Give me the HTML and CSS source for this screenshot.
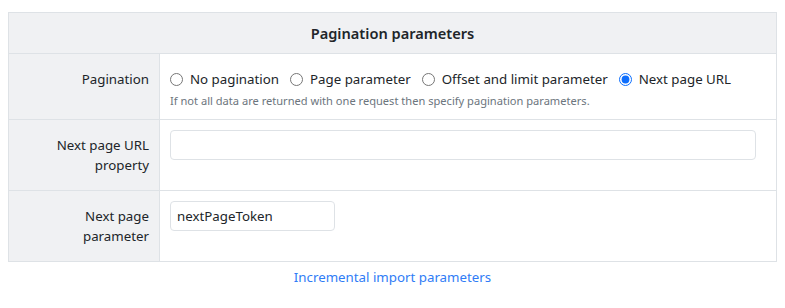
FILE: index.html
```html
<!DOCTYPE html>
<html lang="en">
<head>
    <meta charset="UTF-8">
    <title>Pagination parameters</title>
    <link rel="stylesheet" href="styles.css">
</head>
<body>
    <table class="params">
        <tr>
            <th colspan="2" class="params-title">Pagination parameters</th>
        </tr>
        <tr>
            <td class="label">Pagination</td>
            <td class="value">
                <div class="radios">
                    <label><input type="radio" name="pagination"> No pagination</label>
                    <label><input type="radio" name="pagination"> Page parameter</label>
                    <label><input type="radio" name="pagination"> Offset and limit parameter</label>
                    <label><input type="radio" name="pagination" checked> Next page URL</label>
                </div>
                <div class="help">If not all data are returned with one request then specify pagination parameters.</div>
            </td>
        </tr>
        <tr>
            <td class="label">Next page URL property</td>
            <td class="value"><input type="text" class="field field-wide"></td>
        </tr>
        <tr>
            <td class="label">Next page parameter</td>
            <td class="value"><input type="text" class="field field-short" value="nextPageToken"></td>
        </tr>
    </table>
    <div class="more"><a href="#">Incremental import parameters</a></div>
</body>
</html>
```

FILE: styles.css
```css
body {
    font-family: "Noto Sans", "Open Sans", sans-serif;
    font-size: 13.3px;
    line-height: 20px;
    color: #212529;
    margin: 12px 8px 8px;
    background-color: #fff;
}
.params {
    width: 769px;
    border-collapse: collapse;
    border: 1px solid #dee2e6;
}
.params td, .params th {
    border: 1px solid #dee2e6;
    vertical-align: top;
}
.params-title {
    background-color: #f0f1f3;
    font-size: 14.6px;
    font-weight: 600;
    padding: 10px;
    text-align: center;
}
.label {
    width: 130px;
    background-color: #f0f1f3;
    text-align: right;
    padding: 15px 10px;
}
.value {
    padding: 10px 20px 10px 10px;
}
.radios {
    display: flex;
    gap: 11px;
    margin-top: 5px;
}
.radios label {
    display: flex;
    align-items: center;
    gap: 7px;
    white-space: nowrap;
}
.radios input {
    margin: 0;
    width: 13px;
    height: 13px;
    accent-color: #0d6efd;
}
.help {
    font-size: 11.1px;
    line-height: 16px;
    color: #6c757d;
    margin-top: 4px;
}
.field {
    box-sizing: border-box;
    height: 30px;
    padding: 4px 6px;
    border: 1px solid #dee2e6;
    border-radius: 4px;
    font-family: inherit;
    font-size: 13.3px;
    color: #212529;
    margin-top: 0;
}
.field-wide {
    width: 100%;
}
.field-short {
    width: 165px;
}
.more {
    text-align: center;
    margin-top: 5px;
}
.more a {
    color: #2f7cf6;
    text-decoration: none;
}
```
